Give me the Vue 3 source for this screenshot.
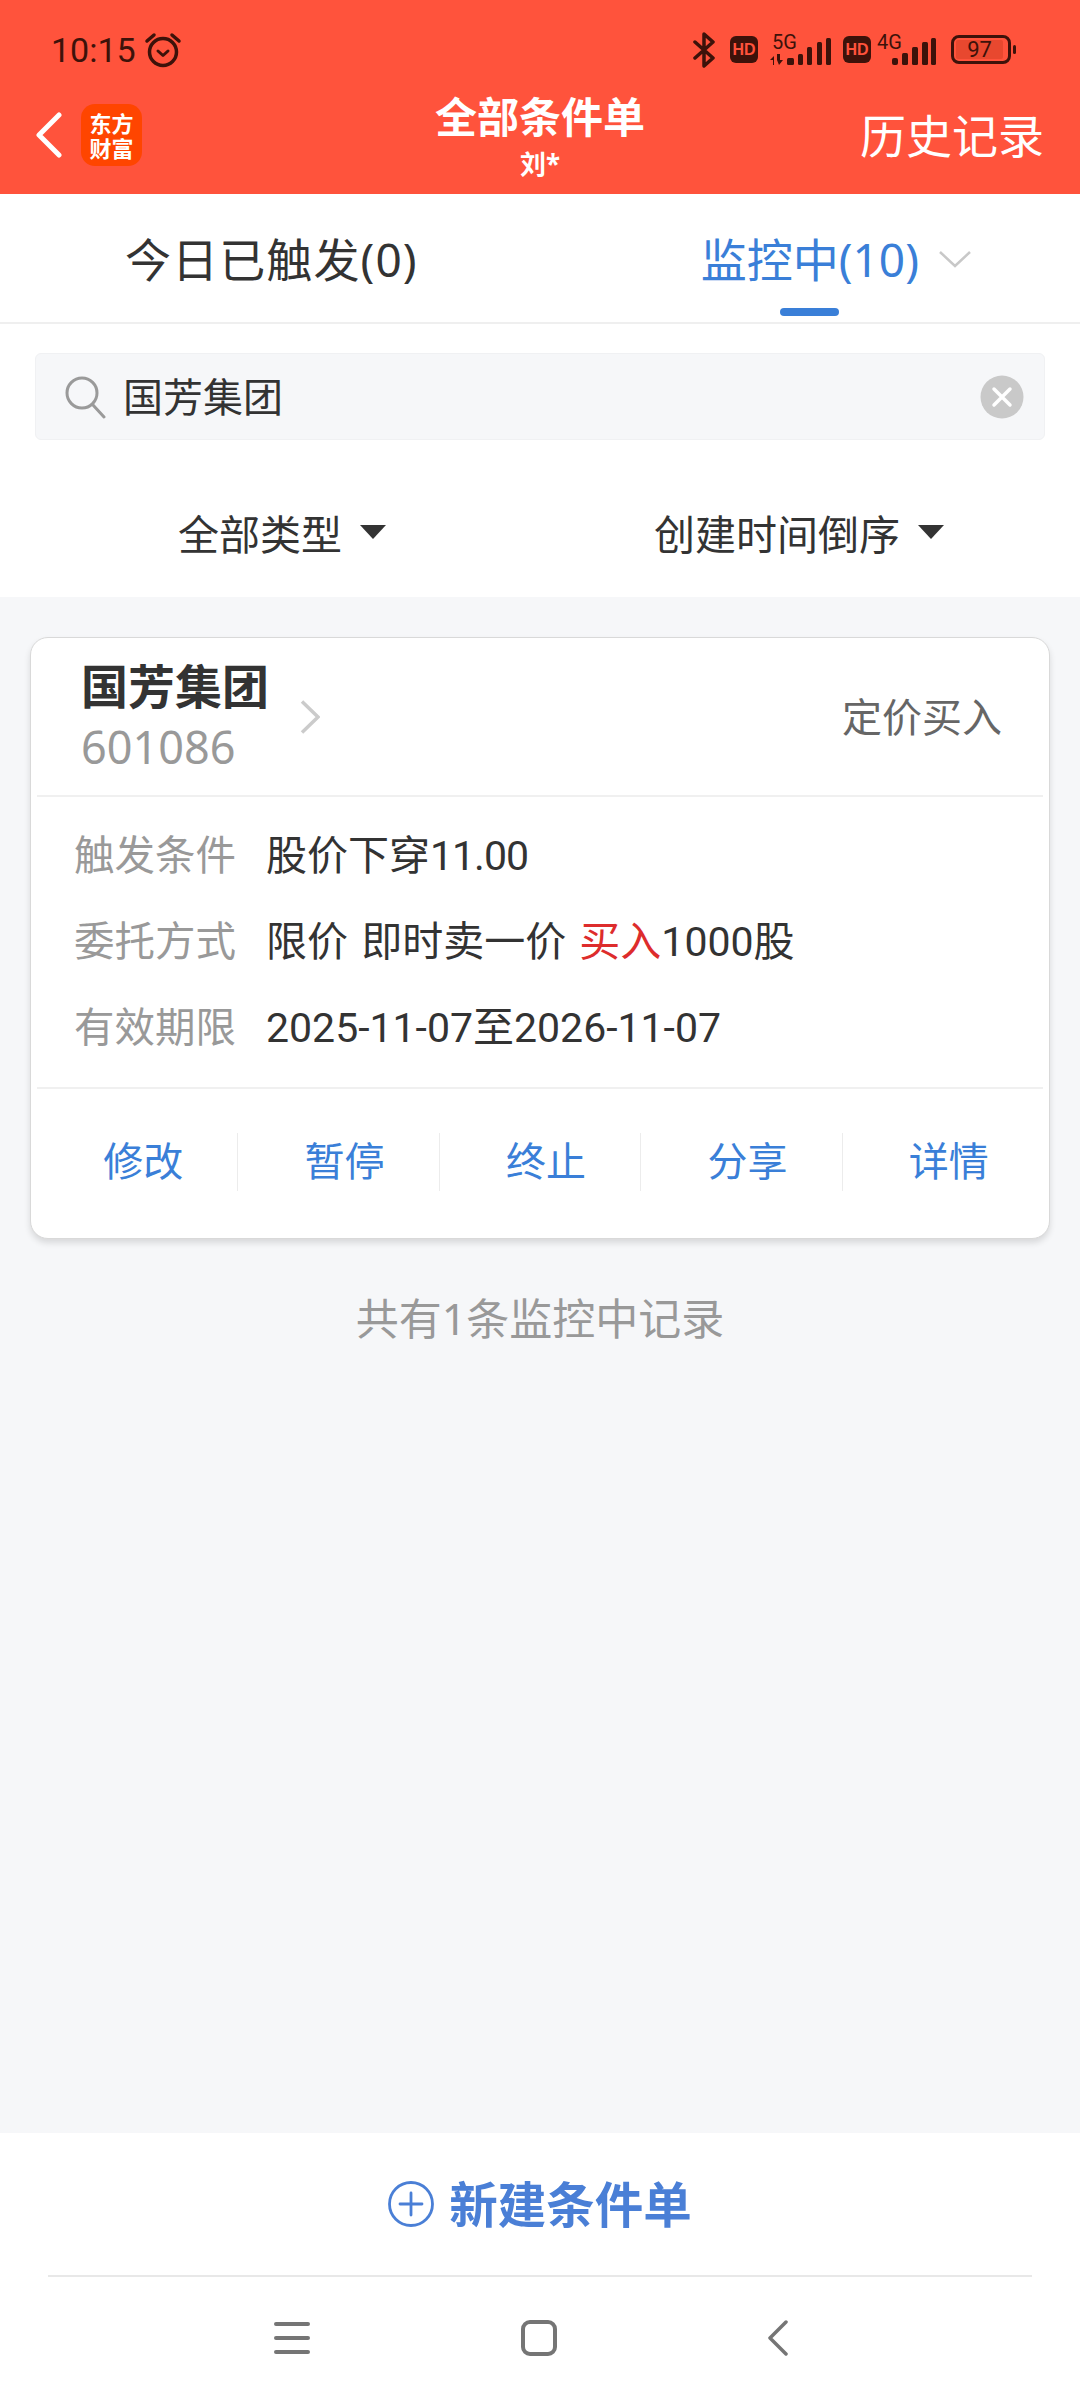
<template>
  <div class="page">
    <header class="top">
      <div class="status">
        <div class="status-left">
          <span class="time">10:15</span>
          <svg class="alarm" width="38" height="36" viewBox="0 0 38 36" fill="none" stroke="#3d120a" stroke-linecap="round">
            <circle cx="19" cy="20" r="13.5" stroke-width="3.5" />
            <path d="M14 19l5 4.500 5-4.500" stroke-width="3" stroke-linejoin="round" />
            <path d="M3 9l7-6M35 9l-7-6" stroke-width="3.500" />
          </svg>
        </div>
        <div class="status-right">
          <svg class="bt" width="24" height="36" viewBox="0 0 24 36" fill="none" stroke="#3d120a" stroke-width="3.500" stroke-linejoin="round" stroke-linecap="round">
            <path d="M3 10l18 16-9 8V2l9 8L3 26" />
          </svg>
          <span class="hd">HD</span>
          <svg class="sig" width="62" height="40" viewBox="0 -8 62 40" fill="#3d120a">
            <text x="2" y="15" font-size="20" font-family="Roboto, sans-serif">5G</text>
            <path d="M0 26l4-4v9h-1v-5zM7 20h3v6h3l-4 5-2-5z" />
            <rect x="17" y="24" width="7" height="7" rx="1.500" />
            <rect x="28" y="20" width="5" height="11" rx="1.500" />
            <rect x="37" y="13" width="5" height="18" rx="1.500" />
            <rect x="47" y="8" width="5" height="23" rx="1.500" />
            <rect x="56" y="4" width="5" height="27" rx="1.500" />
          </svg>
          <span class="hd hd2">HD</span>
          <svg class="sig sig4" width="60" height="40" viewBox="0 -8 60 40" fill="#3d120a">
            <text x="0" y="15" font-size="20" font-family="Roboto, sans-serif">4G</text>
            <rect x="15" y="24" width="6" height="7" rx="2" />
            <rect x="25" y="19" width="6" height="12" rx="1.500" />
            <rect x="35" y="13" width="6" height="18" rx="1.500" />
            <rect x="45" y="8" width="6" height="23" rx="1.500" />
            <rect x="54" y="4" width="5" height="27" rx="1.500" />
          </svg>
          <div class="battery">
            <div class="cell"><span class="level">97</span></div>
            <i class="tip"></i>
          </div>
        </div>
      </div>
      <div class="nav">
        <div class="nav-left">
          <svg width="26" height="46" viewBox="0 0 26 46" fill="none" stroke="#fff" stroke-width="5" stroke-linecap="round" stroke-linejoin="round">
            <path d="M23 3L3 23l20 20" />
          </svg>
          <div class="logo"><span>东方</span><span>财富</span></div>
        </div>
        <div class="title">
          <div class="title-main">全部条件单</div>
          <div class="title-sub">刘*</div>
        </div>
        <div class="history">历史记录</div>
      </div>
    </header>

    <div class="tabs">
      <div class="tab first">今日已触发(0)</div>
      <div class="tab active">
        <span class="tab-label">监控中(10)<i class="underline"></i></span>
        <svg class="tab-arrow" width="32" height="18" viewBox="0 0 32 18" fill="none" stroke="#c8c8c8" stroke-width="2.500">
          <path d="M1 2l15 14L31 2" />
        </svg>
      </div>
    </div>

    <div class="search-wrap">
      <div class="search">
        <svg width="42" height="44" viewBox="0 0 42 44" fill="none" stroke="#9a9a9a" stroke-width="3" stroke-linecap="round">
          <circle cx="17" cy="18" r="15" />
          <path d="M28 30l11 12" />
        </svg>
        <span class="search-text">国芳集团</span>
        <svg class="clear" width="44" height="44" viewBox="0 0 44 44">
          <circle cx="22" cy="22" r="21.500" fill="#c9c9c9" />
          <path d="M14 14l16 16M30 14L14 30" stroke="#fff" stroke-width="3.500" stroke-linecap="round" />
        </svg>
      </div>
    </div>

    <div class="filters">
      <div class="filter">全部类型<i class="caret"></i></div>
      <div class="filter">创建时间倒序<i class="caret"></i></div>
    </div>

    <main class="list">
      <section class="card">
        <div class="card-head">
          <div class="stock">
            <div class="stock-name">国芳集团</div>
            <div class="stock-code">601086</div>
          </div>
          <svg class="chev" width="20" height="34" viewBox="0 0 20 34" fill="none" stroke="#cbcbcb" stroke-width="3.500">
            <path d="M2 1.500L18 17 2 32.500" />
          </svg>
          <div class="order-type">定价买入</div>
        </div>
        <div class="card-body">
          <div class="row">
            <span class="row-label">触发条件</span>
            <span class="row-value">股价下穿<span class="num">11.00</span></span>
          </div>
          <div class="row">
            <span class="row-label">委托方式</span>
            <span class="row-value spaced">限价 即时卖一价 <em class="buy">买入</em>1000股</span>
          </div>
          <div class="row">
            <span class="row-label">有效期限</span>
            <span class="row-value">2025-11-07至2026-11-07</span>
          </div>
        </div>
        <div class="actions">
          <div v-for="a in actions" :key="a" class="action"><span>{{ a }}</span></div>
        </div>
      </section>
      <div class="summary">共有1条监控中记录</div>
    </main>

    <footer class="bottom">
      <div class="create">
        <svg width="46" height="46" viewBox="0 0 46 46" fill="none" stroke="#4a7fd6" stroke-width="2.800" stroke-linecap="round">
          <circle cx="23" cy="23" r="21.500" />
          <path d="M23 12v22M12 23h22" />
        </svg>
        <span class="create-text">新建条件单</span>
      </div>
      <div class="sys-nav">
        <svg width="36" height="34" viewBox="0 0 36 34" stroke="#757575" stroke-width="4" stroke-linecap="round">
          <path d="M2 3h32M2 17h32M2 31h32" />
        </svg>
        <svg width="36" height="36" viewBox="0 0 36 36" fill="none" stroke="#757575" stroke-width="4">
          <rect x="2" y="2" width="32" height="32" rx="7" />
        </svg>
        <svg width="20" height="36" viewBox="0 0 20 36" fill="none" stroke="#757575" stroke-width="3.500" stroke-linecap="round" stroke-linejoin="round">
          <path d="M18 2L2 18l16 16" />
        </svg>
      </div>
    </footer>
  </div>
</template>

<script setup>
const actions = ['修改', '暂停', '终止', '分享', '详情']
</script>

<style>
html,
body {
  margin: 0;
  background: #fff;
}
</style>

<style scoped>
.page {
  width: 1080px;
  height: 2400px;
  display: flex;
  flex-direction: column;
  background: #fff;
  color: #333;
  font-family: "Noto Sans", "Noto Sans CJK SC", sans-serif;
  overflow: hidden;
}

.top {
  height: 194px;
  flex: none;
  background: #ff533c;
  display: flex;
  flex-direction: column;
}

.status {
  height: 94px;
  box-sizing: border-box;
  padding: 8px 64px 0 51px;
  display: flex;
  align-items: center;
  justify-content: space-between;
  color: #3d120a;
}

.status-left {
  display: flex;
  align-items: center;
  gap: 8px;
}

.time {
  font-size: 34px;
  font-family: Roboto, sans-serif;
  line-height: 40px;
}

.status-right {
  display: flex;
  align-items: center;
}

.hd {
  width: 28px;
  height: 27px;
  margin-left: 14px;
  border-radius: 6px;
  background: #3d120a;
  color: #ff533c;
  font: 700 16px/27px "Liberation Sans", sans-serif;
  text-align: center;
}

.hd2 {
  margin-left: 11px;
}

.sig {
  margin: -8px 0 0 12px;
}

.sig4 {
  margin-left: 6px;
}

.battery {
  margin-left: 14px;
  display: flex;
  align-items: center;
  gap: 2px;
}

.cell {
  width: 60px;
  height: 29px;
  box-sizing: border-box;
  border: 3px solid #3d120a;
  border-radius: 8px;
  padding: 2px;
}

.level {
  display: block;
  height: 100%;
  width: 94%;
  border-radius: 2px;
  background: #e8482f;
  font: 22px/19px Roboto, sans-serif;
  text-align: center;
  color: #3d120a;
}

.tip {
  width: 3px;
  height: 9px;
  border-radius: 2px;
  background: #3d120a;
}

.nav {
  flex: 1;
  display: grid;
  grid-template-columns: 1fr auto 1fr;
  align-items: center;
  padding: 0 36px 15px;
  color: #fff;
}

.nav-left {
  display: flex;
  align-items: center;
  gap: 19px;
}

.logo {
  width: 61px;
  height: 62px;
  border-radius: 14px;
  background: #ff4500;
  display: flex;
  flex-direction: column;
  align-items: center;
  justify-content: center;
  font-size: 22px;
  line-height: 25px;
  font-weight: 700;
  font-family: "Noto Sans CJK SC", sans-serif;
}

.title {
  text-align: center;
  margin-top: -6px;
}

.title-main {
  font-size: 42px;
  line-height: 64px;
  font-weight: 700;
}

.title-sub {
  font-size: 26px;
  line-height: 30px;
  font-weight: 700;
}

.history {
  justify-self: end;
  font-size: 46px;
  line-height: 60px;
}

.tabs {
  height: 130px;
  flex: none;
  box-sizing: border-box;
  border-bottom: 2px solid #efefef;
  display: flex;
  padding-left: 125px;
}

.tab {
  font-size: 46px;
  line-height: 130px;
  height: 128px;
  display: flex;
}

.tab.first {
  letter-spacing: 1.100px;
}

.tab.active {
  margin-left: 283px;
  color: #3a7fd8;
}

.tab-label {
  position: relative;
}

.underline {
  position: absolute;
  left: 79px;
  bottom: 6px;
  width: 59px;
  height: 8px;
  border-radius: 4px;
  background: #3a7fd8;
}

.tab-arrow {
  margin: 56px 0 0 20px;
}

.search-wrap {
  padding: 29px 35px 0;
}

.search {
  height: 87px;
  box-sizing: border-box;
  border: 1px solid #f0f1f3;
  border-radius: 6px;
  background: #f6f7f9;
  display: flex;
  align-items: center;
  padding: 0 20px 0 29px;
  gap: 16px;
}

.search-text {
  font-size: 40px;
  flex: 1;
  padding-bottom: 4px;
}

.filters {
  height: 157px;
  flex: none;
  display: flex;
  align-items: center;
  box-sizing: border-box;
  padding-top: 26px;
  font-size: 41px;
}

.filter {
  display: flex;
  align-items: center;
  margin-left: 178px;
}

.filter + .filter {
  margin-left: 268px;
}

.caret {
  margin-left: 18px;
  border-left: 13px solid transparent;
  border-right: 13px solid transparent;
  border-top: 14px solid #333;
}

.list {
  flex: 1;
  background: #f6f7f9;
  padding: 40px 30px 0;
}

.card {
  height: 602px;
  box-sizing: border-box;
  background: #fff;
  border: 1px solid #d9d9d9;
  border-radius: 18px;
  box-shadow: 0 4px 6px rgba(0, 0, 0, 0.12);
  padding: 0 6px;
  display: flex;
  flex-direction: column;
}

.card-head {
  height: 157px;
  flex: none;
  border-bottom: 2px solid #f0f0f0;
  display: flex;
  align-items: center;
  padding: 0 41px 0 44px;
}

.stock {
  margin-top: -6px;
}

.stock-name {
  font-size: 47px;
  line-height: 66px;
  font-weight: 700;
  font-family: "Noto Sans CJK SC", sans-serif;
}

.stock-code {
  font-size: 45px;
  line-height: 60px;
  color: #999;
}

.chev {
  margin-left: 31px;
}

.order-type {
  margin-left: auto;
  font-size: 40px;
  color: #666;
  padding-bottom: 4px;
}

.card-body {
  height: 292px;
  flex: none;
  box-sizing: border-box;
  border-bottom: 2px solid #f0f0f0;
  padding: 12px 0 0 37px;
}

.row {
  height: 86px;
  display: flex;
  align-items: center;
  font-size: 41px;
}

.row-label {
  width: 192px;
  font-size: 40.500px;
  color: #999;
}

.row-value {
  font-family: Roboto, "Noto Sans CJK SC", sans-serif;
}

.num {
  letter-spacing: -1px;
}

.spaced {
  word-spacing: 3px;
}

.buy {
  font-style: normal;
  color: #dd2c2c;
}

.actions {
  flex: 1;
  display: flex;
  align-items: center;
  padding-bottom: 4px;
}

.action {
  flex: 1;
  height: 58px;
  display: flex;
  align-items: center;
  justify-content: center;
  padding-left: 12px;
  font-size: 40px;
  color: #3a7fd8;
  border-left: 1px solid #ececec;
}

.action span {
  padding-bottom: 6px;
}

.action:first-child {
  border-left: none;
}

.summary {
  margin-top: 50px;
  text-align: center;
  font-size: 43px;
  line-height: 60px;
  color: #999;
}

.bottom {
  height: 267px;
  flex: none;
  background: #fff;
  display: flex;
  flex-direction: column;
}

.create {
  height: 144px;
  margin: 0 48px;
  box-sizing: border-box;
  border-bottom: 2px solid #e8e8e8;
  display: flex;
  align-items: center;
  justify-content: center;
  gap: 15px;
  flex: none;
}

.create-text {
  font-size: 48.500px;
  font-weight: 700;
  color: #4a7fd6;
  padding-bottom: 4px;
}

.sys-nav {
  flex: 1;
  display: flex;
  align-items: center;
  justify-content: space-between;
  padding: 0 292px 1px 274px;
}
</style>
